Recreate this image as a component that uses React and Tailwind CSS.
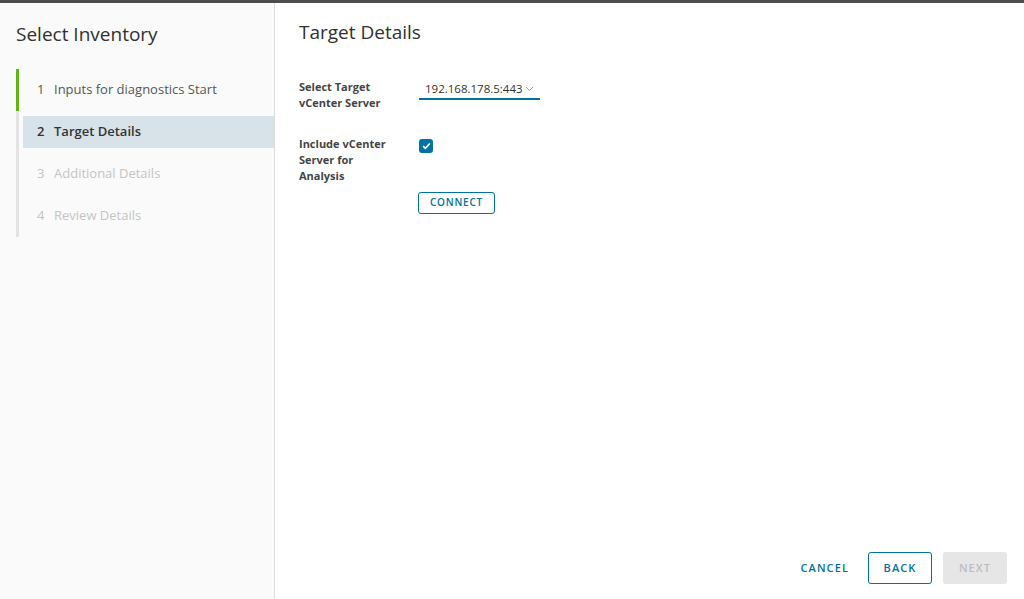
import { useState } from "react";

const STEPS = [
    { n: 1, label: "Inputs for diagnostics Start", state: "done" },
    { n: 2, label: "Target Details", state: "current" },
    { n: 3, label: "Additional Details", state: "todo" },
    { n: 4, label: "Review Details", state: "todo" },
];

const StepItem = ({ step }) => {
    const border =
        step.state === "done" ? "border-[#60b515]" : "border-[#e3e3e3]";
    const text =
        step.state === "done"
            ? "text-[#565656]"
            : step.state === "current"
              ? "text-[#333333] font-semibold"
              : "text-[#c4c4c4]";
    return (
        <div className={`border-l-[3px] ${border} h-[42px] flex items-center pl-[4px]`}>
            <div
                className={`flex items-center w-full h-[32px] pl-[14px] text-[13px] ${text} ${
                    step.state === "current" ? "bg-[#d8e3e9]" : ""
                }`}
            >
                <span className="w-[17px]">{step.n}</span>
                <span>{step.label}</span>
            </div>
        </div>
    );
};

export default function App() {
    const [includeVc, setIncludeVc] = useState(true);

    return (
        <div
            className="w-[1024px] h-[599px] flex flex-col bg-white overflow-hidden"
            style={{ fontFamily: "'Open Sans', Lato, sans-serif" }}
        >
            <div className="h-[3px] bg-[#4d4d4d] shrink-0" />
            <div className="flex flex-1 min-h-0">
                {/* wizard nav */}
                <div className="w-[275px] shrink-0 bg-[#fafafa] border-r border-[#dcdcdc] pl-[16px]">
                    <h1 className="text-[19px] text-[#313131] leading-[24px] mt-[19px] mb-[21px]">
                        Select Inventory
                    </h1>
                    <div className="pt-[2px]">
                        {STEPS.map((s) => (
                            <StepItem key={s.n} step={s} />
                        ))}
                    </div>
                </div>

                {/* content */}
                <div className="flex-1 flex flex-col pl-[24px] pr-[17px]">
                    <h2 className="text-[19px] text-[#313131] leading-[24px] mt-[17px]">
                        Target Details
                    </h2>

                    <div className="flex mt-[35px]">
                        <div className="w-[120px] text-[11px] font-bold text-[#454545] leading-[16px]">
                            Select Target
                            <br />
                            vCenter Server
                        </div>
                        <div className="w-[121px] h-[21px] border-b-2 border-[#0072a3] flex items-center justify-between pl-[6px] pr-[6px] text-[11.5px] text-[#333] mt-0 pt-[1px]">
                            <span>192.168.178.5:443</span>
                            <svg width="9" height="6" viewBox="0 0 9 6">
                                <path d="M1 1l3.5 3.5L8 1" fill="none" stroke="#9a9a9a" strokeWidth="1" />
                            </svg>
                        </div>
                    </div>

                    <div className="flex mt-[25px]">
                        <div className="w-[120px] text-[11px] font-bold text-[#454545] leading-[16px]">
                            Include vCenter
                            <br />
                            Server for
                            <br />
                            Analysis
                        </div>
                        <div>
                            <button
                                onClick={() => setIncludeVc(!includeVc)}
                                className={`w-[14px] h-[14px] rounded-[3px] flex items-center justify-center mt-[3px] ${
                                    includeVc ? "bg-[#0072a3]" : "border border-[#999]"
                                }`}
                            >
                                {includeVc && (
                                    <svg width="9" height="8" viewBox="0 0 9 8">
                                        <path d="M1.2 4.2l2.2 2.1L7.8 1.5" fill="none" stroke="white" strokeWidth="1.6" />
                                    </svg>
                                )}
                            </button>
                        </div>
                    </div>

                    <div className="pl-[119px] mt-[4px]">
                        <button className="h-[22px] w-[77px] border border-[#0072a3] rounded-[3px] text-[10px] font-semibold tracking-[0.08em] text-[#0072a3]">
                            CONNECT
                        </button>
                    </div>

                    <div className="flex-1" />

                    <div className="flex items-center justify-end gap-[11px] mb-[15px]">
                        <button className="h-[32px] pl-[12px] pr-[8px] text-[11px] font-semibold tracking-[0.1em] text-[#0072a3]">
                            CANCEL
                        </button>
                        <button className="h-[32px] w-[64px] border border-[#0072a3] rounded-[3px] text-[11px] font-semibold tracking-[0.1em] text-[#0072a3]">
                            BACK
                        </button>
                        <button className="h-[32px] w-[64px] bg-[#e6e6e6] rounded-[3px] text-[11px] font-semibold tracking-[0.1em] text-[#bdbdbd]">
                            NEXT
                        </button>
                    </div>
                </div>
            </div>
        </div>
    );
}
